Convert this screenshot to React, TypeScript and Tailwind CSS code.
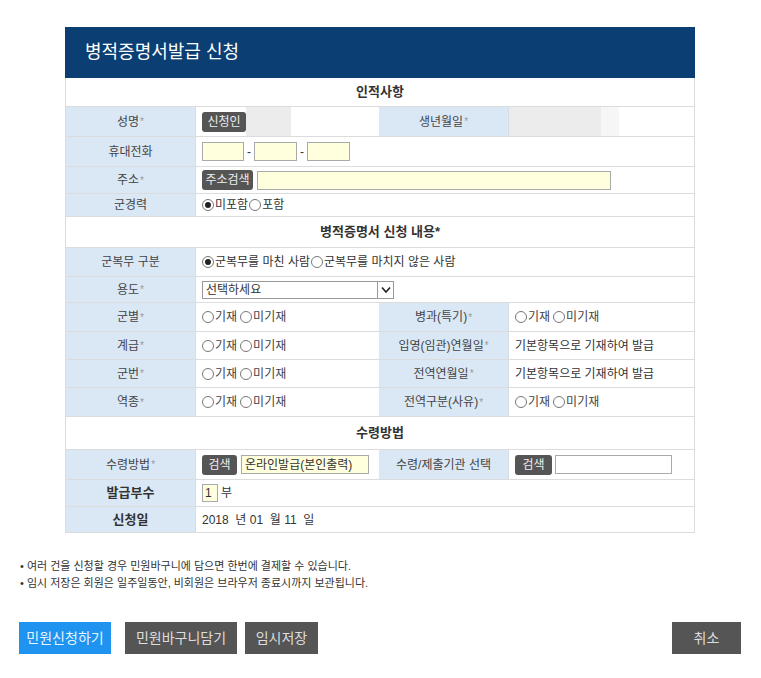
import React from "react";

const Radio = ({ checked = false }: { checked?: boolean }) => (
  <span className="inline-flex items-center justify-center w-[12px] h-[12px] rounded-full border border-[#777] bg-white mr-[1px]">
    {checked && <span className="w-[6px] h-[6px] rounded-full bg-[#222]" />}
  </span>
);

const Label = ({ text, star = false, bold = false }: { text: string; star?: boolean; bold?: boolean }) => (
  <div
    className={`w-[130px] shrink-0 h-full bg-[#dae8f6] flex items-center justify-center border-r border-[#d4dde6] ${
      bold ? "font-bold text-[#333] text-[13px]" : "text-[#444] text-[12px]"
    }`}
  >
    {text}
    {star && <span className="text-[#999] text-[10px] ml-[1px]">*</span>}
  </div>
);

const DarkBtn = ({ text, w }: { text: string; w: string }) => (
  <span className={`inline-flex items-center justify-center h-[20px] ${w} rounded-[3px] bg-[#555] text-[#eee] text-[12px]`}>
    {text}
  </span>
);

const Section = ({ text, h }: { text: string; h: string }) => (
  <div className={`${h} flex items-center justify-center border-b border-[#dcdcdc] font-bold text-[13px] text-[#333]`}>
    {text}
  </div>
);

const YesNo = () => (
  <div className="flex items-center text-[12px] text-[#444]">
    <Radio />
    <span className="mr-[3px]">기재</span>
    <Radio />
    <span>미기재</span>
  </div>
);

export default function App() {
  const row = "flex border-b border-[#dcdcdc]";
  const val = "flex items-center pl-[6px] text-[12px] text-[#333]";

  return (
    <div className="w-[761px] h-[678px] bg-white font-['Liberation_Sans','Noto_Sans_CJK_KR',sans-serif] overflow-hidden">
      <div className="ml-[65px] mt-[27px] w-[630px]">
        {/* 제목 */}
        <div className="h-[51px] bg-[#0b3e72] flex items-center pl-[20px] text-white text-[18px]">
          병적증명서발급 신청
        </div>

        <div className="border-x border-[#dcdcdc]">
          <Section text="인적사항" h="h-[29px]" />

          <div className={`${row} h-[30px]`}>
            <Label text="성명" star />
            <div className="w-[183px] flex items-center pl-[6px]">
              <DarkBtn text="신청인" w="w-[44px]" />
              <div className="w-[45px] h-full bg-[#ececec]" />
            </div>
            <Label text="생년월일" star />
            <div className="flex-1 flex items-stretch">
              <div className="w-[92px] bg-[#ececec]" />
              <div className="w-[18px] bg-[#f6f6f6]" />
            </div>
          </div>

          <div className={`${row} h-[30px]`}>
            <Label text="휴대전화" />
            <div className={val}>
              <span className="w-[42px] h-[19px] bg-[#ffffdd] border border-[#aaa]" />
              <span className="mx-[3px]">-</span>
              <span className="w-[43px] h-[19px] bg-[#ffffdd] border border-[#aaa]" />
              <span className="mx-[3px]">-</span>
              <span className="w-[43px] h-[19px] bg-[#ffffdd] border border-[#aaa]" />
            </div>
          </div>

          <div className={`${row} h-[27px]`}>
            <Label text="주소" star />
            <div className={val}>
              <DarkBtn text="주소검색" w="w-[51px]" />
              <span className="ml-[4px] w-[354px] h-[19px] bg-[#ffffdd] border border-[#aaa]" />
            </div>
          </div>

          <div className={`${row} h-[23px]`}>
            <Label text="군경력" />
            <div className={val}>
              <Radio checked />
              <span className="mr-[1px]">미포함</span>
              <Radio />
              <span>포함</span>
            </div>
          </div>

          <Section text="병적증명서 신청 내용*" h="h-[31px]" />

          <div className={`${row} h-[29px]`}>
            <Label text="군복무 구분" />
            <div className={val}>
              <Radio checked />
              <span className="mr-[1px]">군복무를 마친 사람</span>
              <Radio />
              <span>군복무를 마치지 않은 사람</span>
            </div>
          </div>

          <div className={`${row} h-[26px]`}>
            <Label text="용도" star />
            <div className={val}>
              <div className="w-[192px] h-[18px] border border-[#999] flex items-center bg-white">
                <span className="flex-1 pl-[3px] text-[12px]">선택하세요</span>
                <span className="w-[16px] h-full border-l border-[#999] flex items-center justify-center">
                  <svg width="10" height="8" viewBox="0 0 10 8">
                    <path d="M1 1.5 L5 6 L9 1.5" stroke="#222" strokeWidth="1.6" fill="none" />
                  </svg>
                </span>
              </div>
            </div>
          </div>

          {[
            { a: "군별", b: "병과(특기)", h: "h-[29px]", v: null },
            { a: "계급", b: "입영(임관)연월일", h: "h-[28px]", v: "기본항목으로 기재하여 발급" },
            { a: "군번", b: "전역연월일", h: "h-[28px]", v: "기본항목으로 기재하여 발급" },
            { a: "역종", b: "전역구분(사유)", h: "h-[29px]", v: null },
          ].map((r) => (
            <div key={r.a} className={`${row} ${r.h}`}>
              <Label text={r.a} star />
              <div className="w-[183px] flex items-center pl-[6px]">
                <YesNo />
              </div>
              <Label text={r.b} star />
              <div className={val}>{r.v ? r.v : <YesNo />}</div>
            </div>
          ))}

          <Section text="수령방법" h="h-[33px]" />

          <div className={`${row} h-[30px]`}>
            <Label text="수령방법" star />
            <div className="w-[183px] flex items-center pl-[6px]">
              <DarkBtn text="검색" w="w-[35px]" />
              <span className="ml-[4px] w-[128px] h-[19px] bg-[#ffffdd] border border-[#aaa] flex items-center pl-[3px] text-[12px] text-[#333]">
                온라인발급(본인출력)
              </span>
            </div>
            <Label text="수령/제출기관 선택" />
            <div className={val}>
              <DarkBtn text="검색" w="w-[37px]" />
              <span className="ml-[3px] w-[117px] h-[19px] bg-white border border-[#aaa]" />
            </div>
          </div>

          <div className={`${row} h-[27px]`}>
            <Label text="발급부수" bold />
            <div className={val}>
              <span className="w-[16px] h-[18px] bg-[#ffffdd] border border-[#aaa] flex items-center pl-[2px] text-[12px]">1</span>
              <span className="ml-[3px]">부</span>
            </div>
          </div>

          <div className={`${row} h-[26px]`}>
            <Label text="신청일" bold />
            <div className={val}>2018&nbsp;&nbsp;년 01&nbsp;&nbsp;월 11&nbsp;&nbsp;일</div>
          </div>
        </div>
      </div>

      {/* 안내 */}
      <div className="mt-[25px] ml-[20px] text-[11px] leading-[17px] text-[#333]">
        <p>• 여러 건을 신청할 경우 민원바구니에 담으면 한번에 결제할 수 있습니다.</p>
        <p>• 임시 저장은 회원은 일주일동안, 비회원은 브라우저 종료시까지 보관됩니다.</p>
      </div>

      {/* 버튼 */}
      <div className="mt-[30px] mx-[19px] w-[722px] flex items-center text-[14px]">
        <button className="w-[92px] h-[32px] bg-[#1e93f0] text-[#e8f4ff]">민원신청하기</button>
        <button className="ml-[14px] w-[112px] h-[32px] bg-[#555] text-[#ddd]">민원바구니담기</button>
        <button className="ml-[8px] w-[73px] h-[32px] bg-[#555] text-[#ddd]">임시저장</button>
        <button className="ml-auto w-[69px] h-[32px] bg-[#555] text-[#ddd]">취소</button>
      </div>
    </div>
  );
}
